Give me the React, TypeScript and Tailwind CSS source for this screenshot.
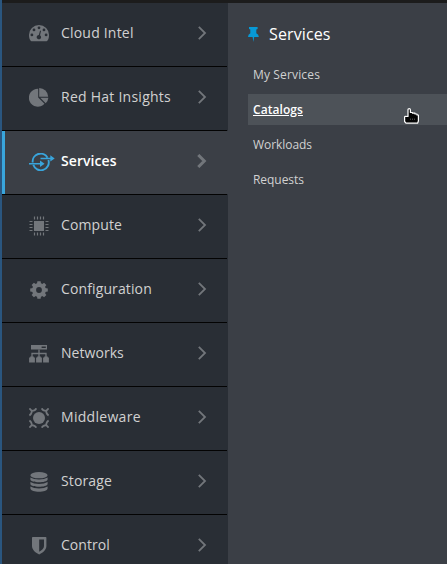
import React from "react";

const Gauge = () => (
  <svg width="20" height="17" viewBox="0 0 20 17" fill="currentColor">
    <path
      fillRule="evenodd"
      d="M10 0A10 10 0 0 0 0 10.2C0 12.3.5 14 1.500 15.600Q1.900 16.200 2.500 16.200H17.500Q18.100 16.200 18.500 15.600C19.500 14 20 12.300 20 10.200A10 10 0 0 0 10 0ZM10 1.400a1.400 1.400 0 1 1 0 2.800a1.400 1.400 0 0 1 0-2.800ZM5 3.500a1.400 1.400 0 1 1 0 2.800a1.400 1.400 0 0 1 0-2.800ZM15 3.500a1.400 1.400 0 1 1 0 2.800a1.400 1.400 0 0 1 0-2.800ZM2.900 8.500a1.400 1.400 0 1 1 0 2.800a1.400 1.400 0 0 1 0-2.800ZM17.100 8.500a1.400 1.400 0 1 1 0 2.800a1.400 1.400 0 0 1 0-2.800ZM11.100 5.600L12 5.900L11 10.200A2.200 2.200 0 1 1 9.800 9.900Z"
    />
  </svg>
);

const Pie = () => (
  <svg width="20" height="19" viewBox="0 0 20 19" fill="currentColor">
    <path d="M9.200 .7V9.500L15.500 15.800A9 9 0 1 1 9.200 .7Z" />
    <path d="M10.200 0A9 9 0 0 1 19.200 8.700H10.200Z" />
    <path d="M11.200 9.800H19.400A9 9 0 0 1 16.700 15.300Z" />
  </svg>
);

const ServiceRing = () => (
  <svg width="26" height="18" viewBox="0 0 26 18" fill="none" stroke="currentColor">
    <path strokeWidth="1.900" d="M3.700 9.500A7.900 7.900 0 0 1 18.500 4.800M4.300 11.800A7.900 7.900 0 0 0 19.400 7" />
    <path strokeWidth="1.500" d="M0 10.800H12M11.500 5.400H22" />
    <path fill="currentColor" stroke="none" d="M11 7.600L15.600 10.800L11 14ZM21.300 2.200L25.700 5.400L21.300 8.600Z" />
  </svg>
);

const Chip = () => (
  <svg width="20" height="20" viewBox="0 0 20 20" fill="currentColor">
    <path d="M5 5H15V15H5Z" />
    <path
      fill="none"
      stroke="currentColor"
      strokeWidth="1.200"
      d="M5.500.5V3.500M8.500.5V3.500M11.500.5V3.500M14.500.5V3.500M5.500 16.500V19.500M8.500 16.500V19.500M11.500 16.500V19.500M14.500 16.500V19.500M.5 5.500H3.500M.5 8.500H3.500M.5 11.500H3.500M.5 14.500H3.500M16.500 5.500H19.500M16.500 8.500H19.500M16.500 11.500H19.500M16.500 14.500H19.500"
    />
  </svg>
);

const Gear = () => (
  <svg width="18" height="18" viewBox="0 0 18 18">
    <circle cx="9" cy="9" r="4.900" fill="none" stroke="currentColor" strokeWidth="4" />
    <g fill="currentColor">
      {[0, 45, 90, 135, 180, 225, 270, 315].map((a) => (
        <path key={a} d="M6.900 3.200L7.400.2H10.600L11.100 3.200Z" transform={`rotate(${a} 9 9)`} />
      ))}
    </g>
  </svg>
);

const Network = () => (
  <svg width="20" height="18" viewBox="0 0 20 18" fill="currentColor">
    <path fillRule="evenodd" d="M2 0H18V4.600H2ZM12.600 1.500V3.100H16.800V1.500Z" />
    <path fill="none" stroke="currentColor" strokeWidth="1.300" d="M10 4.500V12M3 12V8.500H17V12" />
    <path d="M1.200 11.500H4.800V12.500H5.900V17.500H.1V12.500H1.200ZM8.200 11.500H11.800V12.500H12.900V17.500H7.100V12.500H8.200ZM15.200 11.500H18.800V12.500H19.900V17.500H14.100V12.500H15.200Z" />
  </svg>
);

const Middleware = () => (
  <svg width="20" height="20" viewBox="0 0 20 20">
    <circle cx="10" cy="10" r="6" fill="currentColor" />
    <g fill="none" stroke="currentColor" strokeWidth="1.800">
      {[0, 90, 180, 270].map((a) => (
        <path key={a} d="M.4.400L2.800 2.800M7.300.3Q6.300 2.600 2.800 2.900M.3 7.300Q2.600 6.300 2.900 2.800" transform={`rotate(${a} 10 10)`} />
      ))}
    </g>
  </svg>
);

const Database = () => (
  <svg width="18" height="20" viewBox="0 0 18 20" fill="currentColor">
    <ellipse cx="9" cy="3.200" rx="8.600" ry="3.100" />
    <path d="M.4 5.500Q3.500 7.600 9 7.600T17.600 5.500V7.500C17 11.200 1 11.200.4 7.500ZM.4 10Q3.500 12.100 9 12.100T17.600 10V12C17 15.700 1 15.700.4 12ZM.4 14.500Q3.500 16.600 9 16.600T17.600 14.500V16.500C17 20.800 1 20.800.4 16.500Z" />
  </svg>
);

const Shield = () => (
  <svg width="15" height="18" viewBox="0 0 15 18" fill="currentColor">
    <path fillRule="evenodd" d="M.8 0H13.700Q14.400 0 14.400.8V9C14.400 13 10.500 16 7.200 17.500C3.900 16 0 13 0 9V.8Q0 0 .8 0ZM7.200 2.400V14.800C9.800 13.300 12 11.300 12 9V2.400Z" />
  </svg>
);

const Chevron = ({ bold }: { bold?: boolean }) => (
  <svg className="mr-[21px] shrink-0 text-[#72767b]" width="10" height="14" viewBox="0 0 10 14" fill="none" stroke="currentColor">
    {bold ? <path strokeWidth="3" d="M1.300 1L7.300 7L1.300 13" /> : <path strokeWidth="1.800" d="M1.800.8L8 7L1.800 13.200" />}
  </svg>
);

const items = [
  { label: "Cloud Intel", Icon: Gauge, tracking: "tracking-[0.2px]" },
  { label: "Red Hat Insights", Icon: Pie, tracking: "tracking-[0.25px]" },
  { label: "Services", Icon: ServiceRing, tracking: "tracking-[0.08px]", active: true },
  { label: "Compute", Icon: Chip, tracking: "tracking-[0.12px]" },
  { label: "Configuration", Icon: Gear, tracking: "tracking-[0.12px]" },
  { label: "Networks", Icon: Network, tracking: "tracking-[0.05px]" },
  { label: "Middleware", Icon: Middleware, tracking: "tracking-[0.3px]" },
  { label: "Storage", Icon: Database, tracking: "tracking-[0.12px]" },
  { label: "Control", Icon: Shield, tracking: "tracking-[0.05px]" },
];

const links = [
  { label: "My Services", tracking: "tracking-[0.15px]" },
  { label: "Catalogs", tracking: "tracking-[0.06px]", current: true },
  { label: "Workloads", tracking: "tracking-[-0.05px]" },
  { label: "Requests", tracking: "tracking-[-0.05px]" },
];

const Pin = () => (
  <svg className="mt-px" width="11" height="15" viewBox="0 0 11 15" fill="#0799d6">
    <path d="M1 0H9.600V2L8.300 2.500V6.200Q10.800 7.500 10.800 10H6.200L5.400 15L4.600 10H0Q0 7.500 2.300 6.200V2.500L1 2Z" />
  </svg>
);

const HandCursor = () => (
  <svg className="absolute left-[404px] top-[108px]" width="16" height="17" viewBox="0 0 16 17">
    <path
      d="M4 8.500V1.800Q4 .6 5.200.6T6.400 1.800V4.500H8.500V5.200H11V6H13V7H14.400V13L13.600 15.200H2L.6 13.500V9Q.6 8.300 1.500 8.300Z"
      fill="#050505"
      stroke="#fff"
      strokeWidth="1.200"
      strokeLinejoin="round"
    />
    <path d="M6.500 10.500V12M8.500 10.500V12M10.500 10.500V12" stroke="#555" strokeWidth=".8" />
  </svg>
);

export default function App() {
  return (
    <div className="relative flex h-[564px] w-[447px] overflow-hidden bg-[#3b3f46] font-['Open_Sans',sans-serif]">
      <div className="w-[2px] shrink-0 bg-[#2a567f]" />
      <div className="flex min-w-0 flex-1 flex-col">
        <div className="h-[3px] shrink-0 bg-[#1c1c1c]" />
        <div className="flex min-h-0 flex-1">
          <nav className="w-[226px] shrink-0 overflow-hidden bg-[#292e35]">
            {items.map(({ label, Icon, tracking, active }) => (
              <div key={label} className="flex h-16 flex-col">
                <a
                  className={
                    active
                      ? "flex flex-1 items-center border-l-[3px] border-[#39a5dc] bg-[#3b3f46] pb-[3px] pl-[24px] text-sm font-semibold text-white"
                      : "flex flex-1 items-center pb-[3px] pl-[27px] text-sm text-[#d1d1d1]"
                  }
                >
                  <span className={active ? "flex w-5 shrink-0 justify-start pt-px text-[#39a5dc]" : "flex w-5 shrink-0 justify-center pt-px text-[#72767b]"}>
                    <span className="shrink-0"><Icon /></span>
                  </span>
                  <span className={`ml-3 flex-1 whitespace-nowrap ${tracking}`}>{label}</span>
                  <Chevron bold={active} />
                </a>
                <div className="mr-px h-px bg-[#030303]" />
              </div>
            ))}
          </nav>
          <aside className="flex-1 pl-5 pt-[19px]">
            <h2 className="flex h-6 items-center text-base text-white">
              <Pin />
              <span className="ml-[10px] tracking-[0.12px]">Services</span>
            </h2>
            <ul className="mt-[13px] flex flex-col gap-1">
              {links.map(({ label, tracking, current }) => (
                <li
                  key={label}
                  className={
                    current
                      ? "flex h-[31px] items-center bg-[#4d5258] pl-[5px] text-xs font-semibold text-white underline"
                      : "flex h-[31px] items-center pl-[5px] text-xs text-[#d1d1d1]"
                  }
                >
                  <span className={tracking}>{label}</span>
                </li>
              ))}
            </ul>
          </aside>
        </div>
      </div>
      <HandCursor />
    </div>
  );
}
